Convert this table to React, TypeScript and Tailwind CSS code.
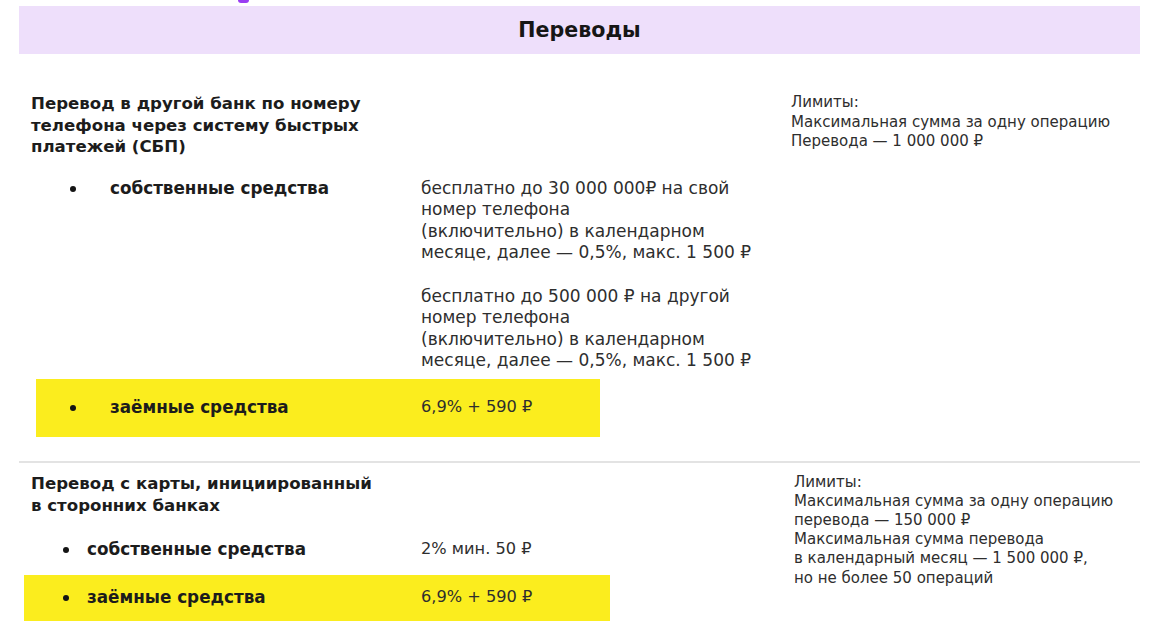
import React from 'react';

const Dot: React.FC = () => <div className="w-[6px] h-[6px] rounded-full bg-[#141414]" />;

const fontMain = { fontFamily: '"DejaVu Sans", sans-serif' };

const App: React.FC = () => {
  return (
    <div className="w-[1149px] h-[626px] bg-white text-[#1c1c1c] overflow-hidden" style={fontMain}>
      {/* остаток фиолетового элемента сверху */}
      <div className="h-[6px] flex">
        <div className="ml-[238px] w-[11px] h-[3px] rounded-b-full bg-[#9a3cf2]" />
      </div>

      <div className="ml-[19px] w-[1121px]">
        <div className="h-[48px] bg-[#eedffb] flex items-center justify-center">
          <h2 className="text-[20.6px] font-bold text-[#161616]">Переводы</h2>
        </div>

        {/* СБП */}
        <div className="flex items-start pt-[39px]">
          <div className="w-[772px]">
            <div className="pl-[12px] text-[16.6px] leading-[21.5px] font-bold">
              Перевод в другой банк по номеру
              <br />
              телефона через систему быстрых
              <br />
              платежей (СБП)
            </div>

            <div className="flex items-start mt-[20px]">
              <div className="w-[91px] pl-[51px] pt-[8px]">
                <Dot />
              </div>
              <div className="w-[311px] text-[16.8px] leading-[21.5px] font-bold">собственные средства</div>
              <div className="text-[17px] leading-[21.5px] text-[#2e2e2e]">
                <p>
                  бесплатно до 30 000 000₽ на свой
                  <br />
                  номер телефона
                  <br />
                  (включительно) в календарном
                  <br />
                  месяце, далее — 0,5%, макс. 1 500 ₽
                </p>
                <p className="mt-[22px]">
                  бесплатно до 500 000 ₽ на другой
                  <br />
                  номер телефона
                  <br />
                  (включительно) в календарном
                  <br />
                  месяце, далее — 0,5%, макс. 1 500 ₽
                </p>
              </div>
            </div>

            <div className="ml-[17px] mt-[7px] w-[564px] h-[58px] bg-[#fbed1e] flex items-center">
              <div className="w-[74px] pl-[34px]">
                <Dot />
              </div>
              <div className="w-[311px] text-[16.8px] font-bold">заёмные средства</div>
              <div className="text-[16.2px] text-[#2e2e2e]">6,9% + 590 ₽</div>
            </div>
          </div>

          <div className="text-[15px] leading-[19.5px] text-[#2e2e2e]">
            Лимиты:
            <br />
            Максимальная сумма за одну операцию
            <br />
            Перевода — 1 000 000 ₽
          </div>
        </div>

        <div className="mt-[24px] h-[2px] bg-[#e3e3e3]" />

        {/* сторонние банки */}
        <div className="flex items-start pt-[10px]">
          <div className="w-[775px]">
            <div className="pl-[12px] text-[16.6px] leading-[22px] font-bold">
              Перевод с карты, инициированный
              <br />
              в сторонних банках
            </div>

            <div className="mt-[10px] h-[46px] flex items-center">
              <div className="w-[68px] pl-[44px]">
                <Dot />
              </div>
              <div className="w-[334px] text-[16.8px] font-bold">собственные средства</div>
              <div className="text-[16.2px] text-[#2e2e2e]">2% мин. 50 ₽</div>
            </div>

            <div className="ml-[5px] mt-[2px] w-[586px] h-[46px] bg-[#fbed1e] flex items-center">
              <div className="w-[63px] pl-[39px]">
                <Dot />
              </div>
              <div className="w-[334px] text-[16.8px] font-bold">заёмные средства</div>
              <div className="text-[16.2px] text-[#2e2e2e]">6,9% + 590 ₽</div>
            </div>
          </div>

          <div className="text-[15px] leading-[19.2px] text-[#2e2e2e]">
            Лимиты:
            <br />
            Максимальная сумма за одну операцию
            <br />
            перевода — 150 000 ₽
            <br />
            Максимальная сумма перевода
            <br />
            в календарный месяц — 1 500 000 ₽,
            <br />
            но не более 50 операций
          </div>
        </div>
      </div>
    </div>
  );
};

export default App;
